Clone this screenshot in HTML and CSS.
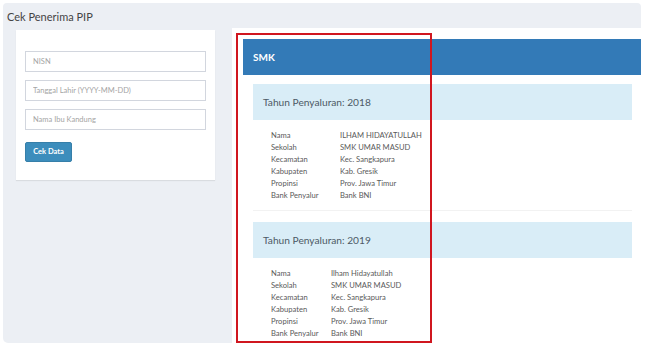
FILE: index.html
```html
<!DOCTYPE html>
<html>
<head>
  <title>Cek Penerima PIP</title>
  <link rel="stylesheet" href="styles.css">
</head>
<body>
  <div class="box">
    <div class="box-title">Cek Penerima PIP</div>
    <div class="box-body">
      <div class="left-col">
        <div class="card">
          <form class="search-form">
            <input type="text" placeholder="NISN">
            <input type="text" placeholder="Tanggal Lahir (YYYY-MM-DD)">
            <input type="text" placeholder="Nama Ibu Kandung">
            <button type="button" class="btn-cek">Cek Data</button>
          </form>
        </div>
      </div>

      <div class="right-col">
        <div class="panel-primary">
          <div class="panel-heading">SMK</div>
          <div class="panel-body">
            <div class="panel-info">
              <div class="info-heading">Tahun Penyaluran: 2018</div>
              <table class="data-table wide">
                <tr><td>Nama</td><td>ILHAM HIDAYATULLAH</td></tr>
                <tr><td>Sekolah</td><td>SMK UMAR MASUD</td></tr>
                <tr><td>Kecamatan</td><td>Kec. Sangkapura</td></tr>
                <tr><td>Kabupaten</td><td>Kab. Gresik</td></tr>
                <tr><td>Propinsi</td><td>Prov. Jawa Timur</td></tr>
                <tr><td>Bank Penyalur</td><td>Bank BNI</td></tr>
              </table>
            </div>
            <hr class="sep">
            <div class="panel-info">
              <div class="info-heading">Tahun Penyaluran: 2019</div>
              <table class="data-table">
                <tr><td>Nama</td><td>Ilham Hidayatullah</td></tr>
                <tr><td>Sekolah</td><td>SMK UMAR MASUD</td></tr>
                <tr><td>Kecamatan</td><td>Kec. Sangkapura</td></tr>
                <tr><td>Kabupaten</td><td>Kab. Gresik</td></tr>
                <tr><td>Propinsi</td><td>Prov. Jawa Timur</td></tr>
                <tr><td>Bank Penyalur</td><td>Bank BNI</td></tr>
              </table>
            </div>
          </div>
        </div>
        <div class="highlight"></div>
      </div>
    </div>
  </div>
</body>
</html>
```

FILE: styles.css
```css
body {
  font-family: Lato, "Open Sans", sans-serif;
  background-color: #fff;
  margin: 0;
  padding: 3px 5px 0 3px;
  overflow: hidden;
  height: 348px;
}
.box-title {
  background-color: #eceff4;
  border-radius: 4px 4px 0 0;
  height: 25px;
  line-height: 27px;
  padding-left: 4px;
  font-size: 11px;
  color: #444;
}
.box-body {
  display: flex;
  align-items: flex-start;
}
.left-col {
  width: 229px;
  height: 315px;
  box-sizing: border-box;
  background-color: #eceff4;
  border-radius: 0 0 0 5px;
  padding: 2px 17px 0 13px;
}
.card {
  background-color: #fff;
  padding: 21px 9px 18px 9px;
  box-shadow: 0 1px 1px rgba(0, 0, 0, 0.08);
}
.search-form input[type="text"] {
  display: block;
  width: 100%;
  box-sizing: border-box;
  height: 21px;
  margin: 0 0 8px 0;
  padding: 0 7px;
  border: 1px solid #d2d6de;
  font-family: inherit;
  font-size: 7.5px;
  color: #555;
}
.search-form input::placeholder {
  color: #a4a4a4;
}
.btn-cek {
  margin-top: 1px;
  width: 47px;
  height: 20px;
  padding: 0;
  background-color: #3c8dbc;
  border: 1px solid #367fa9;
  border-radius: 2px;
  color: #fff;
  font-family: inherit;
  font-size: 7.5px;
  font-weight: bold;
}
.right-col {
  flex: 1;
  position: relative;
  background-color: #fff;
  padding: 11px 0 0 10px;
  margin-left: 1px;
}
.panel-heading {
  background-color: #337ab7;
  color: #fff;
  height: 36px;
  line-height: 36px;
  padding-left: 10px;
  font-size: 10px;
  font-weight: bold;
}
.panel-body {
  padding: 9px 9px 0 10px;
}
.info-heading {
  background-color: #d9edf7;
  color: #4d5a66;
  height: 36px;
  line-height: 37px;
  padding-left: 10px;
  font-size: 10.2px;
}
.data-table {
  border-collapse: collapse;
  margin: 9px 0 0 18px;
  font-size: 7.6px;
  color: #5a5a5a;
}
.data-table td {
  padding: 0;
  height: 12px;
  line-height: 12px;
}
.data-table td:first-child {
  width: 60px;
}
.data-table.wide td:first-child {
  width: 69px;
}
.sep {
  border: 0;
  border-top: 1px solid #f2f2f2;
  margin: 9px 0 11px 0;
}
.highlight {
  position: absolute;
  left: 3px;
  top: 5px;
  width: 192px;
  height: 306px;
  border: 2px solid #d0161f;
}
```
